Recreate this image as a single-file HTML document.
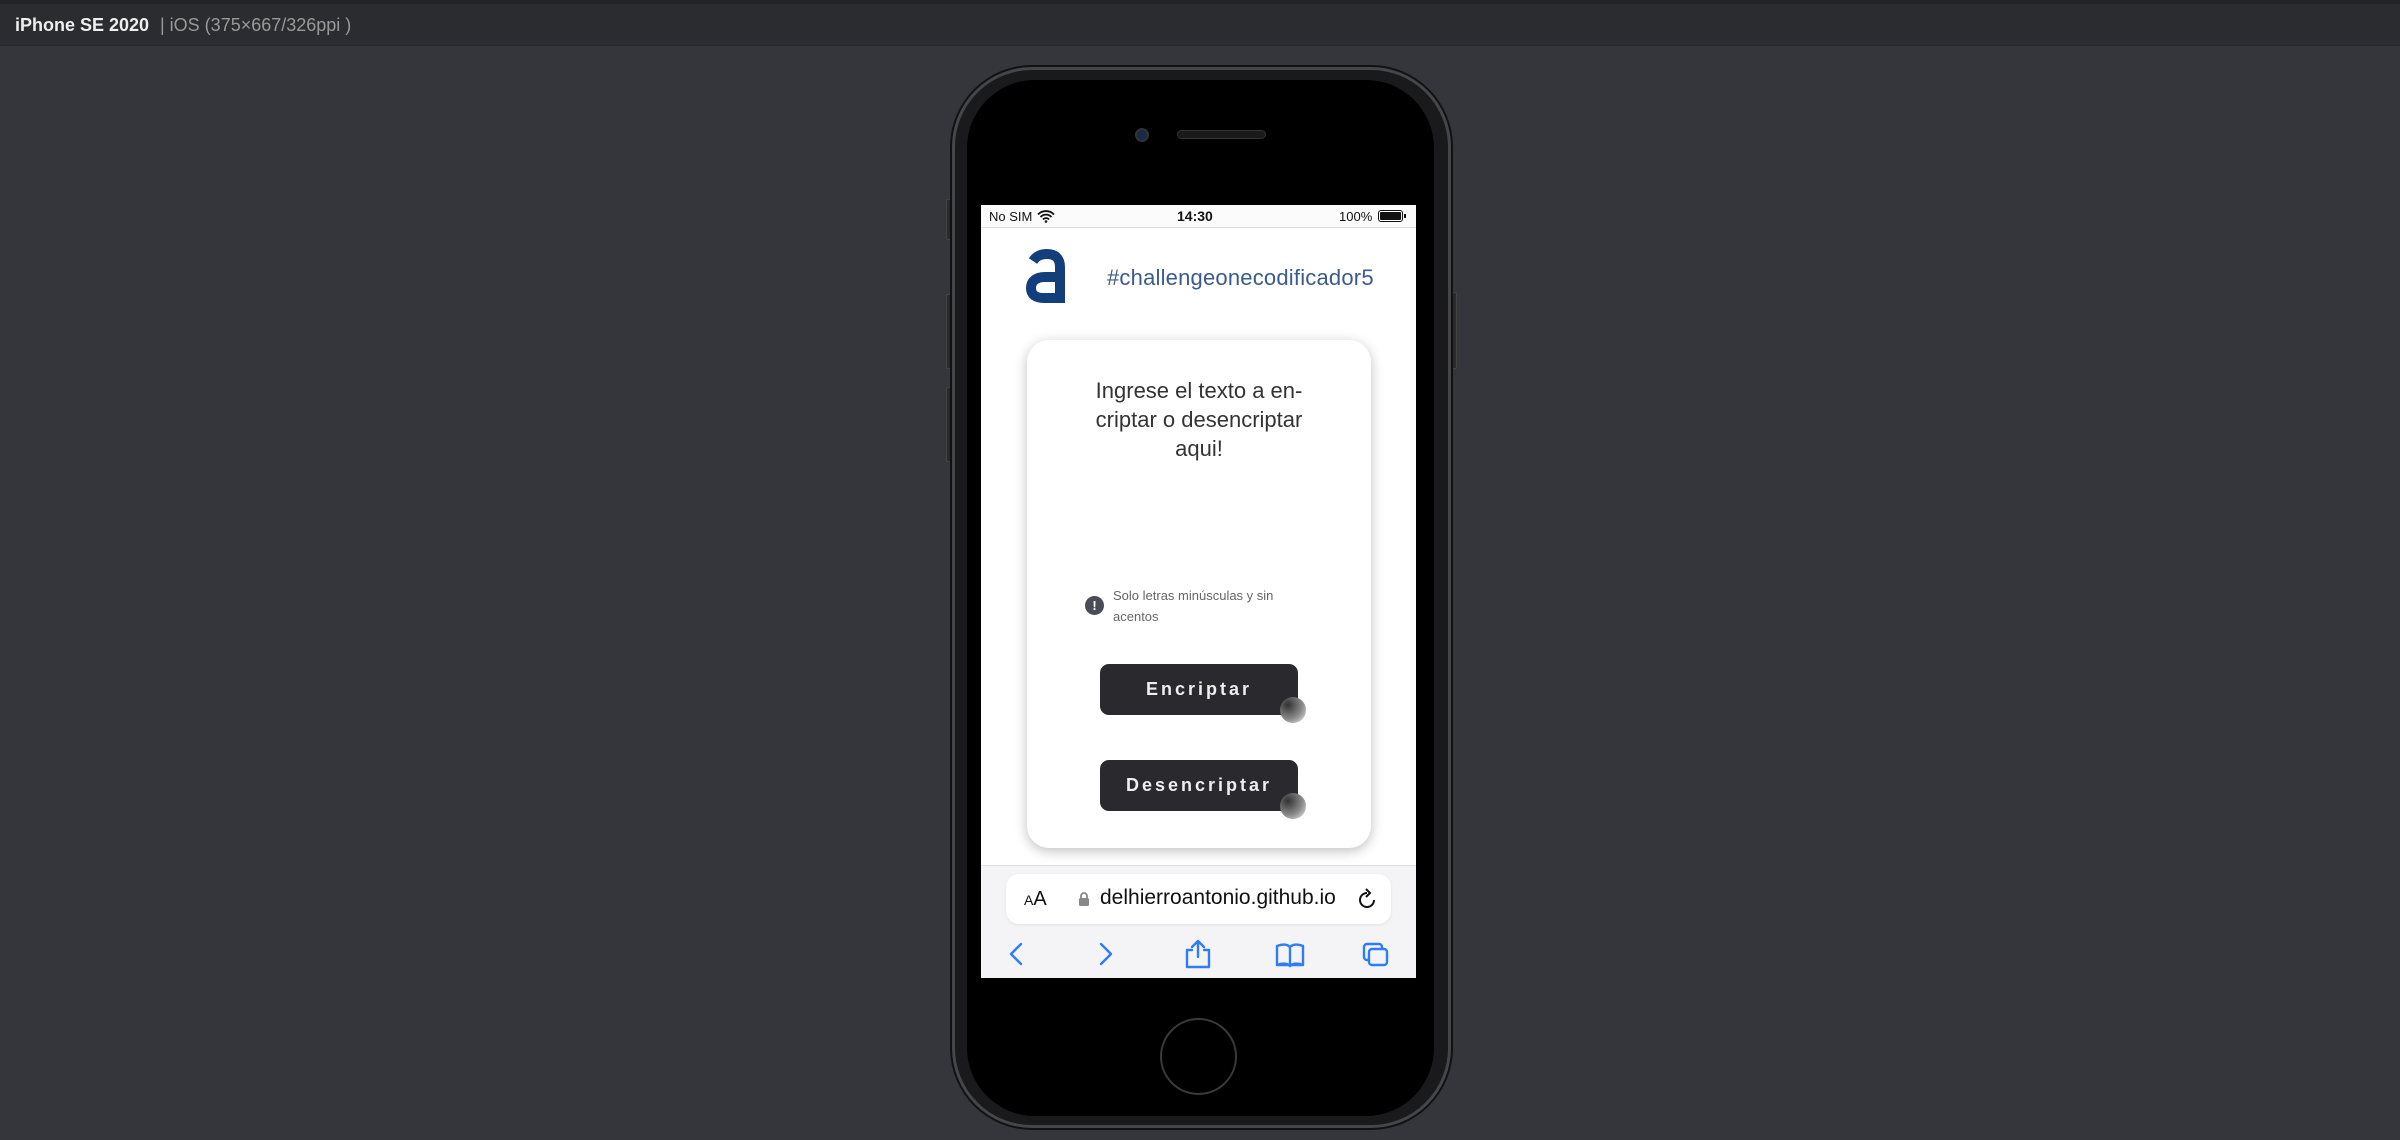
<!DOCTYPE html>
<html><head><meta charset="utf-8"><style>
*{margin:0;padding:0;box-sizing:border-box}
body{width:2400px;height:1140px;background:#35363b;position:relative;overflow:hidden;font-family:"Liberation Sans",sans-serif}
.abs{position:absolute}
#top{left:0;top:0;width:2400px;height:46px;background:#2b2c30;border-top:4px solid #222326;border-bottom:1px solid #26272a}
#top span{position:absolute;top:11px;font-size:18px}
.phone{left:952px;top:67px;width:499px;height:1061px;border-radius:80px;background:#1a1a1c;border:3px solid #45464a;box-shadow:0 0 0 2px #111}
.bezel{left:967px;top:80px;width:467px;height:1036px;border-radius:68px;background:#000}
.screen{left:981px;top:205px;width:435px;height:773px;background:#fff;overflow:hidden}
.btnside{background:#2a2a2c;border:1px solid #444}
.card{left:46px;top:135px;width:344px;height:508px;border-radius:22px;background:#fff;box-shadow:0 3px 12px rgba(0,0,0,.25)}
.b{position:absolute;left:73px;width:198px;height:51px;border-radius:9px;background:#2a2a2e;color:#eee;font-weight:bold;font-size:18px;letter-spacing:3px;text-align:center;line-height:51px}
.blob{position:absolute;right:-8px;bottom:-8px;width:26px;height:26px;border-radius:50%;background:radial-gradient(circle at 30% 30%,#333 0%,#888 55%,#eee 100%)}
</style></head><body>
<div id="top" class="abs"><span style="left:15px;color:#eee;font-weight:bold">iPhone SE 2020</span><span style="left:160px;color:#999">| iOS (375×667/326ppi )</span></div>

<div class="abs btnside" style="left:946px;top:199px;width:7px;height:41px;border-radius:2px"></div>
<div class="abs btnside" style="left:946px;top:294px;width:7px;height:75px;border-radius:2px"></div>
<div class="abs btnside" style="left:946px;top:387px;width:7px;height:75px;border-radius:2px"></div>
<div class="abs btnside" style="left:1450px;top:292px;width:7px;height:77px;border-radius:2px"></div>
<div class="abs phone"></div>
<div class="abs bezel"></div>
<div class="abs" style="left:1135px;top:128px;width:14px;height:14px;border-radius:50%;background:#1a2a44;border:2px solid #333"></div>
<div class="abs" style="left:1177px;top:130px;width:89px;height:9px;border-radius:5px;background:#1a1a1a;border:1px solid #333"></div>
<div class="abs" style="left:1160px;top:1018px;width:77px;height:77px;border-radius:50%;border:2px solid #3a3a3c;background:#000"></div>

<div class="abs screen">
  <div class="abs" style="left:0;top:0;width:435px;height:23px;background:#fbfbfb;border-bottom:1px solid #ddd;font-size:13px;color:#111">
    <span class="abs" style="left:8px;top:4px">No SIM</span>
    <svg class="abs" style="left:56px;top:5px" width="18" height="13" viewBox="0 0 18 13"><path d="M1 4.5a11 11 0 0 1 16 0M3.5 7a7.5 7.5 0 0 1 11 0M6 9.5a4 4 0 0 1 6 0" stroke="#111" stroke-width="1.8" fill="none"/><circle cx="9" cy="11.5" r="1.3" fill="#111"/></svg>
    <span class="abs" style="left:196px;top:3px;font-weight:bold;font-size:14px">14:30</span>
    <span class="abs" style="left:358px;top:4px">100%</span>
    <div class="abs" style="left:397px;top:5px;width:25px;height:12px;border:1.5px solid #111;border-radius:3px;padding:1px"><div style="width:100%;height:100%;background:#111;border-radius:1px"></div></div>
    <div class="abs" style="left:423px;top:9px;width:2px;height:4px;background:#111"></div>
  </div>
  <svg class="abs" style="left:45px;top:44px" width="40" height="54" viewBox="0 0 40 54"><path d="M7 12C11 6 16 5 21 5c9 0 13 5 13 13v36" stroke="#123f7c" stroke-width="10" fill="none"/><path d="M34 28H19C10 28 5 32 5 39s5 10 13 10h16" stroke="#123f7c" stroke-width="10" fill="none"/></svg>
  <div class="abs" style="left:126px;top:60px;color:#3b5b8a;font-size:22px;letter-spacing:0.2px">#challengeonecodificador5</div>
  <div class="abs card">
    <div class="abs" style="left:0;width:344px;top:36px;text-align:center;font-size:22px;line-height:29px;color:#333">Ingrese el texto a en-<br>criptar o desencriptar<br>aqui!</div>
    <div class="abs" style="left:58px;top:256px;width:19px;height:19px;border-radius:50%;background:#4a4d55;color:#fff;font-size:13px;font-weight:bold;text-align:center;line-height:19px">!</div>
    <div class="abs" style="left:86px;top:245px;font-size:13px;line-height:21px;color:#666">Solo letras minúsculas y sin<br>acentos</div>
    <div class="b" style="top:324px">Encriptar<div class="blob"></div></div>
    <div class="b" style="top:420px">Desencriptar<div class="blob"></div></div>
  </div>
  <div class="abs" style="left:0;top:660px;width:435px;height:113px;background:#f4f4f6;border-top:1px solid #ddd">
    <div class="abs" style="left:25px;top:8px;width:385px;height:50px;border-radius:13px;background:#fff;box-shadow:0 1px 3px rgba(0,0,0,.08)">
      <span class="abs" style="left:18px;top:14px;font-size:20px;color:#111"><small style="font-size:14px">A</small>A</span>
      <svg class="abs" style="left:72px;top:17px" width="12" height="16" viewBox="0 0 12 16"><path d="M3 7V5a3 3 0 0 1 6 0v2" stroke="#888" stroke-width="1.8" fill="none"/><rect x="1" y="7" width="10" height="8" rx="1.5" fill="#888"/></svg>
      <span class="abs" style="left:94px;top:12px;font-size:21px;color:#111">delhierroantonio.github.io</span>
      <svg class="abs" style="left:351px;top:14px" width="20" height="22" viewBox="0 0 20 22"><path d="M10 5a7 7 0 1 0 7 7" stroke="#111" stroke-width="2" fill="none"/><path d="M9 1l4 4-4 4" stroke="#111" stroke-width="2" fill="none"/></svg>
    </div>
    <svg class="abs" style="left:0;top:72px" width="435" height="34" viewBox="0 0 435 34" fill="none" stroke="#2f7cf6" stroke-width="2.4" stroke-linecap="round" stroke-linejoin="round">
      <path d="M40 6l-10 10 10 10"/>
      <path d="M120 6l10 10-10 10"/>
      <path d="M211 12h-5v17h22v-17h-5M217 3v16M211 9l6-6 6 6"/>
      <path d="M296 8c5-2 10-2 13 1v19c-3-3-8-3-13-1zM309 9c3-3 8-3 13-1v19c-5-2-10-2-13 1M296 27h26"/>
      <rect x="383" y="6" width="18" height="16" rx="3"/><rect x="388" y="11" width="18" height="16" rx="3" fill="#f4f4f6"/>
    </svg>
  </div>
</div>
</body></html>
